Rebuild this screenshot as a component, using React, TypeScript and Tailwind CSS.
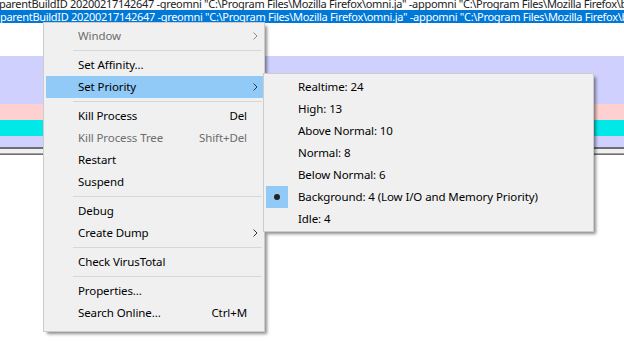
import React from "react";

const CMD =
  'parentBuildID 20200217142647 -greomni "C:\\Program Files\\Mozilla Firefox\\omni.ja" -appomni "C:\\Program Files\\Mozilla Firefox\\brows';

type Item =
  | { sep: true }
  | { sep?: false; label: string; accel?: string; sub?: boolean; disabled?: boolean; active?: boolean };

const MAIN: Item[] = [
  { label: "Window", sub: true, disabled: true },
  { sep: true },
  { label: "Set Affinity..." },
  { label: "Set Priority", sub: true, active: true },
  { sep: true },
  { label: "Kill Process", accel: "Del" },
  { label: "Kill Process Tree", accel: "Shift+Del", disabled: true },
  { label: "Restart" },
  { label: "Suspend" },
  { sep: true },
  { label: "Debug" },
  { label: "Create Dump", sub: true },
  { sep: true },
  { label: "Check VirusTotal" },
  { sep: true },
  { label: "Properties..." },
  { label: "Search Online...", accel: "Ctrl+M" },
];

const PRIORITIES = [
  "Realtime: 24",
  "High: 13",
  "Above Normal: 10",
  "Normal: 8",
  "Below Normal: 6",
  "Background: 4 (Low I/O and Memory Priority)",
  "Idle: 4",
];

function Chevron({ dim }: { dim?: boolean }) {
  return (
    <svg width="5" height="8" viewBox="0 0 5 8" className={dim ? "text-[#8a8a8a]" : "text-[#333]"}>
      <path d="M0.5 0.5 L4 4 L0.5 7.5" fill="none" stroke="currentColor" strokeWidth="1" />
    </svg>
  );
}

function MenuRow({ item }: { item: Item }) {
  if (item.sep) {
    return (
      <div className="h-[7px] flex items-center pl-[29px] pr-[2px]">
        <div className="h-px w-full bg-[#d7d7d7]" />
      </div>
    );
  }
  return (
    <div className="px-[2px] pr-[1px]">
      <div
        className={`h-[22px] flex items-center pl-[32px] pr-[5px] ${item.active ? "bg-[#91c9f7]" : ""} ${
          item.disabled ? "text-[#6d6d6d]" : "text-black"
        }`}
      >
        <span className="flex-1 whitespace-nowrap">{item.label}</span>
        {item.accel && <span className="whitespace-nowrap mr-[11px]">{item.accel}</span>}
        {item.sub && (
          <span className="w-[5px] flex items-center">
            <Chevron dim={item.disabled} />
          </span>
        )}
      </div>
    </div>
  );
}

export default function App() {
  return (
    <div className="relative w-[624px] h-[359px] overflow-hidden bg-white text-[11.5px] tracking-[-0.1px] font-['Noto_Sans',sans-serif]">
      {/* process list behind the menu */}
      <div className="flex flex-col text-[11px] tracking-[-0.3px]">
        <div className="h-[10px] overflow-hidden">
          <div className="whitespace-nowrap leading-[13px] -mt-[3px] text-[#222] -ml-[1px]">{CMD}</div>
        </div>
        <div className="h-[13px] bg-[#0078d7] text-white whitespace-nowrap leading-[13px] overflow-hidden">{CMD}</div>
        <div className="h-[33px]" />
        <div className="h-[48px] bg-[#d0d0ff]" />
        <div className="h-[16px] bg-[#ffd0d0]" />
        <div className="h-[16px] bg-[#00e8e8]" />
        <div className="h-[11px] bg-[#d0d0ff]" />
        <div className="h-[2px] bg-[#6e6e6e]" />
        <div className="h-[4px] bg-[#f0f0f0]" />
        <div className="h-[1px] bg-[#a0a0a0]" />
        <div className="h-[1px] bg-[#6e6e6e]" />
      </div>

      {/* context menu */}
      <div className="absolute left-[43px] top-[22px] w-[222px] bg-[#f0f0f0] border border-[#cccccc] pt-[2px] pb-[7px] shadow-[3px_3px_3px_-1px_rgba(0,0,0,0.45)]">
        {MAIN.map((it, i) => (
          <MenuRow key={i} item={it} />
        ))}
      </div>

      {/* priority submenu */}
      <div className="absolute left-[263px] top-[73px] w-[331px] bg-[#f0f0f0] border border-[#cccccc] pt-[2px] pb-px shadow-[3px_3px_3px_-1px_rgba(0,0,0,0.45)]">
        {PRIORITIES.map((p) => (
          <div key={p} className="h-[22px] flex items-center pl-[2px]">
            <div className={`w-[22px] h-[22px] flex items-center justify-center ${p.startsWith("Background") ? "bg-[#91c9f7]" : ""}`}>
              {p.startsWith("Background") && <div className="w-[6px] h-[6px] rounded-full bg-[#222]" />}
            </div>
            <span className="ml-[10px] whitespace-nowrap text-black">{p}</span>
          </div>
        ))}
      </div>
    </div>
  );
}
